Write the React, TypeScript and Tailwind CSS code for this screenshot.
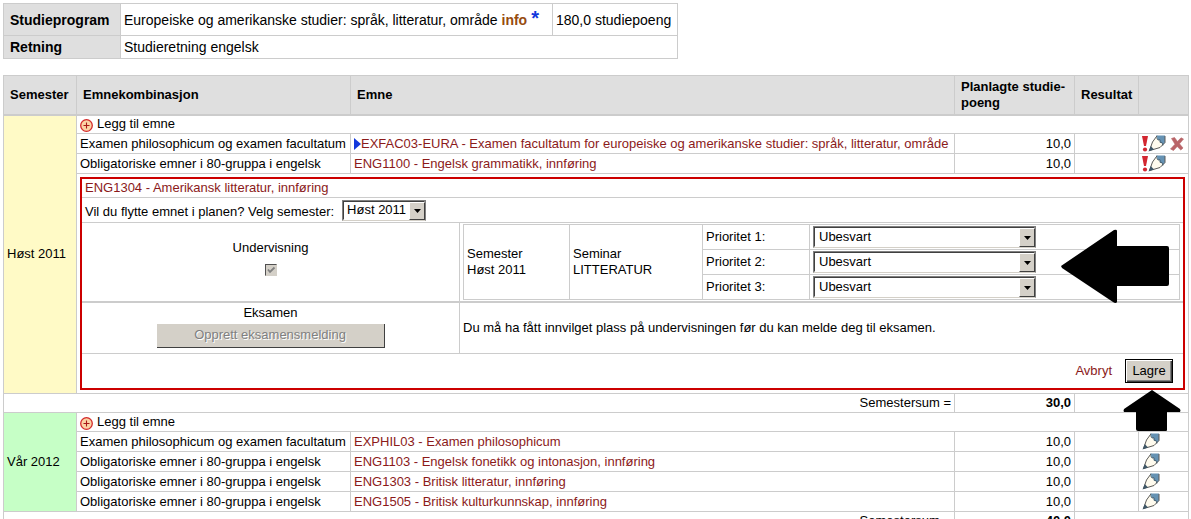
import React from 'react';

interface Course {
  group: string;
  name: string;
  marked?: boolean;
  required?: boolean;
  removable?: boolean;
}

const autumn: Course[] = [
  { group: 'Examen philosophicum og examen facultatum', name: 'EXFAC03-EURA - Examen facultatum for europeiske og amerikanske studier: språk, litteratur, område', marked: true, required: true, removable: true },
  { group: 'Obligatoriske emner i 80-gruppa i engelsk', name: 'ENG1100 - Engelsk grammatikk, innføring', required: true },
];

const spring: Course[] = [
  { group: 'Examen philosophicum og examen facultatum', name: 'EXPHIL03 - Examen philosophicum' },
  { group: 'Obligatoriske emner i 80-gruppa i engelsk', name: 'ENG1103 - Engelsk fonetikk og intonasjon, innføring' },
  { group: 'Obligatoriske emner i 80-gruppa i engelsk', name: 'ENG1303 - Britisk litteratur, innføring' },
  { group: 'Obligatoriske emner i 80-gruppa i engelsk', name: 'ENG1505 - Britisk kulturkunnskap, innføring' },
];

const PlusIcon = () => (
  <svg className="w-[13px] h-[13px]" viewBox="0 0 13 13" fill="none">
    <circle cx="6.5" cy="6.5" r="5.8" fill="#fbd3a5" stroke="#d42a2a" strokeWidth="1.3" />
    <path d="M6.5 3.500v6M3.500 6.500h6" stroke="#a81818" strokeWidth="1.1" />
  </svg>
);

const RequiredIcon = () => (
  <svg className="w-[6px] h-4" viewBox="0 0 6 16" fill="#d22630">
    <path d="M0 0h6L4 10H2z" />
    <circle cx="3" cy="13.5" r="2.1" />
  </svg>
);

const PencilIcon = () => (
  <svg className="w-[18px] h-[17px]" viewBox="0 0 18 17">
    <path d="M8.500 1L14 7.500 15.500 9.500 12 13 6 14.500 1 16 4 8z" fill="#fffbee" />
    <path d="M8 .5H17V7.500L14.800 10.500 14 7.600 12 7.400 12 5 10 4.800 9.300 3z" fill="#6592b3" />
    <path d="M8.500 2.500L10 5l2-.2v2.500l2 .2.800 3" fill="none" stroke="#3f5a6c" strokeWidth=".9" />
    <path d="M9 .8L4.500 7 1.500 15.500 7 14l5-1.500L17 7.500V1" fill="none" stroke="#5c5b58" strokeWidth="1" />
    <path d="M2.800 11L.5 16.500 6 14.500z" fill="#3f5666" />
  </svg>
);

const RemoveIcon = () => (
  <svg className="w-[14px] h-[14px]" viewBox="0 0 14 14">
    <path d="M1.500 1.500L4.500 .5 7.500 4.500 11 .8 13.500 2 9.500 6.800 13 11 10.800 13 7.200 9.500 3.500 13.500 .5 12 5 7.200z" fill="#b96468" stroke="#b96468" strokeWidth=".6" />
  </svg>
);

const Select: React.FC<{ id: string; value: string; className: string; boxClass: string }> = ({ id, value, className, boxClass }) => (
  <span className={`relative inline-block align-top border border-t-[#808080] border-l-[#808080] border-r-[#808080] border-b-[#d4d0c8] ${boxClass}`}>
    <select
      id={id}
      className={`block w-full appearance-none bg-white border border-t-[#404040] border-l-[#404040] border-r-[#d4d0c8] border-b-white pr-4 text-[13px] leading-4 text-black ${className}`}
    >
      <option>{value}</option>
    </select>
    <span className="pointer-events-none absolute right-0 top-px bottom-0 flex w-4 items-center justify-center border border-t-white border-l-white border-r-[#404040] border-b-[#404040] bg-[#d4d0c8]">
      <svg className="w-[7px] h-1" viewBox="0 0 7 4"><path d="M0 0h7L3.500 4z" /></svg>
    </span>
  </span>
);

const AddRow: React.FC<{ semester: string; span: number; color: string }> = ({ semester, span, color }) => (
  <tr className="h-[19px]">
    <th rowSpan={span} scope="rowgroup" className={`border border-[#ccc] px-[3px] text-left font-normal ${color}`}>{semester}</th>
    <td colSpan={5} className="border border-[#ccc] px-[3px]">
      <a href="#" className="flex items-end gap-1">
        <PlusIcon />
        Legg til emne
      </a>
    </td>
  </tr>
);

const CourseRow: React.FC<{ course: Course }> = ({ course }) => (
  <tr className="h-5">
    <td className="border border-[#ccc] px-[3px] whitespace-nowrap">{course.group}</td>
    <td className="border border-[#ccc] px-[3px] whitespace-nowrap">
      <a href="#" className="flex items-center text-[#8b1a1a]">
        {course.marked && <svg className="w-[7px] h-3" viewBox="0 0 7 12" fill="#1238dc"><path d="M0 0l7 6-7 6z" /></svg>}
        {course.name}
      </a>
    </td>
    <td className="border border-[#ccc] px-[3px] text-right">10,0</td>
    <td className="border border-[#ccc]" />
    <td className="border border-[#ccc] pl-[3px]">
      <div className="flex h-4 items-center">
        {course.required && <RequiredIcon />}
        <button type="button" aria-label="Rediger"><PencilIcon /></button>
        {course.removable && <button type="button" aria-label="Slett" className="ml-1"><RemoveIcon /></button>}
      </div>
    </td>
  </tr>
);

const SumRow: React.FC<{ sum: string }> = ({ sum }) => (
  <tr className="h-[19px]">
    <td colSpan={3} className="border border-[#ccc] px-[3px] text-right">Semestersum =</td>
    <td className="border border-[#ccc] px-[3px] text-right font-bold">{sum}</td>
    <td colSpan={2} className="border border-[#ccc]" />
  </tr>
);

const PriorityTable = () => (
  <table className="w-full border-collapse">
    <tbody>
      {[1, 2, 3].map((n) => (
        <tr key={n} className="h-[25px]">
          {n === 1 && (
            <>
              <td rowSpan={3} className="w-[106px] border border-[#ccc] px-[3px]">Semester<br />Høst 2011</td>
              <td rowSpan={3} className="w-[133px] border border-[#ccc] px-[3px]">Seminar<br />LITTERATUR</td>
            </>
          )}
          <td className="w-[107px] border border-[#ccc] px-[3px]">
            <label htmlFor={`prioritet-${n}`}>Prioritet {n}:</label>
          </td>
          <td className="border border-[#ccc] px-[3px]">
            <Select id={`prioritet-${n}`} value="Ubesvart" boxClass="w-[223px]" className="h-5 pl-1" />
          </td>
        </tr>
      ))}
    </tbody>
  </table>
);

const EditPanel = () => (
  <form className="border-2 border-[#c00]">
    <div className="h-[19px] border-b border-[#ccc] px-[3px]">
      <a href="#" className="leading-[18px] text-[#8b1a1a]">ENG1304 - Amerikansk litteratur, innføring</a>
    </div>
    <div className="flex h-[25px] items-center gap-2 border-b border-[#ccc] px-[3px]">
      <label htmlFor="flytt" className="pt-1">Vil du flytte emnet i planen? Velg semester:</label>
      <Select id="flytt" value="Høst 2011" boxClass="w-[84px]" className="h-[19px] pl-[3px]" />
    </div>
    <div className="flex border-b-2 border-[#ccc]">
      <div className="flex w-[378px] flex-col items-center justify-center gap-2 border-r border-[#ccc] pb-2">
        <label htmlFor="undervisning">Undervisning</label>
        <span className="relative h-3 w-3">
          <input
            id="undervisning"
            type="checkbox"
            defaultChecked
            disabled
            className="block h-3 w-3 appearance-none border border-t-[#505050] border-l-[#505050] border-r-[#d4d0c8] border-b-[#d4d0c8] bg-[#d4d0c8]"
          />
          <svg className="pointer-events-none absolute inset-0 h-3 w-3" viewBox="0 0 12 12" fill="none">
            <path d="M3 5.500l2 2.500 4.500-4.500" stroke="#808080" strokeWidth="1.8" />
          </svg>
        </span>
      </div>
      <div className="flex-1 py-px px-[3px]"><PriorityTable /></div>
    </div>
    <div className="flex h-[51px] border-b border-[#ccc]">
      <div className="flex w-[378px] flex-col items-center justify-center gap-[3px] border-r border-[#ccc] pb-1">
        <span>Eksamen</span>
        <button type="button" disabled className="h-6 w-[228px] border-b border-r border-[#404040] bg-[#d4d0c8] text-[#808080] [text-shadow:1px_1px_0_#fff]">
          Opprett eksamensmelding
        </button>
      </div>
      <p className="flex flex-1 items-center px-[3px]">Du må ha fått innvilget plass på undervisningen før du kan melde deg til eksamen.</p>
    </div>
    <div className="flex h-[34px] items-center justify-end gap-[13px] pr-[10px]">
      <a href="#" className="text-[#8b1a1a]">Avbryt</a>
      <button type="button" className="h-6 w-12 border border-black bg-[#d4d0c8] shadow-[inset_1px_1px_0_#fff,inset_-1px_-1px_0_#404040,inset_-2px_-2px_0_#808080]">Lagre</button>
    </div>
  </form>
);

const ProgramTable = () => (
  <table className="border-collapse text-[14px] leading-4">
    <tbody>
      <tr className="h-8">
        <th scope="row" className="w-[117px] border border-[#ccc] bg-[#dfdfdf] px-[6px] text-left">Studieprogram</th>
        <td className="w-[432px] border border-[#ccc] px-[3px] whitespace-nowrap">
          <div className="flex items-center gap-1">
            Europeiske og amerikanske studier: språk, litteratur, område
            <a href="#" className="font-bold text-[#964b0f]">info</a>
            <span className="h-5 text-[20px] font-bold leading-4 text-[#1238dc]">*</span>
          </div>
        </td>
        <td className="w-[125px] border border-[#ccc] px-[3px] whitespace-nowrap">180,0 studiepoeng</td>
      </tr>
      <tr className="h-[23px]">
        <th scope="row" className="border border-[#ccc] bg-[#dfdfdf] px-[6px] text-left">Retning</th>
        <td colSpan={2} className="border border-[#ccc] px-[3px]">Studieretning engelsk</td>
      </tr>
    </tbody>
  </table>
);

export default function App() {
  return (
    <main className="h-screen overflow-hidden bg-white pt-[3px] pl-[3px] pr-[2px] font-['Liberation_Sans',Arial,sans-serif] text-[13px] leading-4 text-black">
      <ProgramTable />
      <div className="relative mt-4">
        <table className="w-full table-fixed border-collapse">
          <colgroup>
            <col className="w-[73px]" />
            <col className="w-[274px]" />
            <col />
            <col className="w-[120px]" />
            <col className="w-[64px]" />
            <col className="w-[50px]" />
          </colgroup>
          <thead>
            <tr className="h-[39px] bg-[#dfdfdf] text-left">
              <th className="border border-b-2 border-[#ccc] px-[6px]">Semester</th>
              <th className="border border-b-2 border-[#ccc] px-[6px]">Emnekombinasjon</th>
              <th className="border border-b-2 border-[#ccc] px-[6px]">Emne</th>
              <th className="border border-b-2 border-[#ccc] px-[6px]">Planlagte studie-<br />poeng</th>
              <th className="border border-b-2 border-[#ccc] px-[6px]">Resultat</th>
              <td className="border border-b-2 border-[#ccc]" />
            </tr>
          </thead>
          <tbody>
            <AddRow semester="Høst 2011" span={4} color="bg-[#fffac6]" />
            {autumn.map((course) => <CourseRow key={course.name} course={course} />)}
            <tr>
              <td colSpan={5} className="border border-[#ccc] p-[3px]"><EditPanel /></td>
            </tr>
            <SumRow sum="30,0" />
          </tbody>
          <tbody>
            <AddRow semester="Vår 2012" span={5} color="bg-[#c6ffc6]" />
            {spring.map((course) => <CourseRow key={course.name} course={course} />)}
            <SumRow sum="40,0" />
          </tbody>
        </table>
        {/* pointers to the priority choices and the save button */}
        <svg className="pointer-events-none absolute right-5 top-[154px] h-[75px] w-[108px]" viewBox="0 0 108 75">
          <path d="M0 37L53 1q3-1 3 1v15h50q2 0 2 2v36q0 2-2 2H56v16q-1 2-4 0L1 39z" />
        </svg>
        <svg className="pointer-events-none absolute right-2 top-[315px] h-[41px] w-[58px]" viewBox="0 0 58 41">
          <path d="M29 0l28 19q1 2 0 3H44v18q0 1-1 1H15q-2 0-2-2V22H1q-1-1 0-3z" />
        </svg>
      </div>
    </main>
  );
}
